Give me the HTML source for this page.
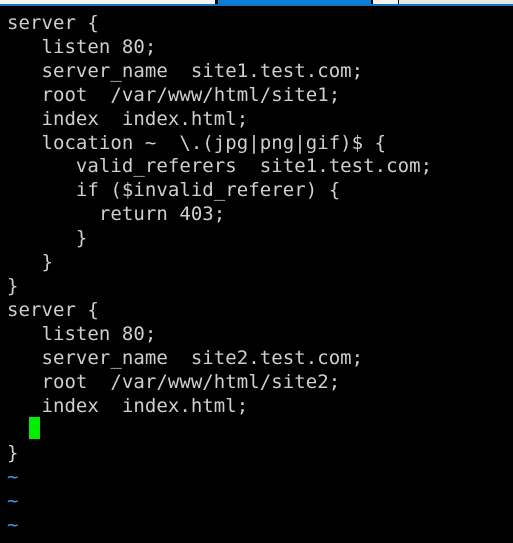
<!DOCTYPE html>
<html><head><style>
html,body{margin:0;padding:0;background:#000;width:513px;height:543px;overflow:hidden}
.bar{position:absolute;top:0;height:4px}
pre{position:absolute;left:7px;top:12px;margin:0;font-family:"DejaVu Sans Mono","Liberation Mono",monospace;font-size:19px;line-height:23.9px;color:#cfcfcf;letter-spacing:0.05px}
.t{color:#3b9fe0}
.cur{position:absolute;left:29px;top:417px;width:11px;height:22px;background:#00ee00}
</style></head><body>
<div class="bar" style="left:0;width:215px;background:#f4f4f4"></div>
<div class="bar" style="left:218px;width:153px;background:#0a7fd6"></div>
<div class="bar" style="left:373px;width:25px;background:#f4f4f4"></div>
<div class="bar" style="left:399px;width:114px;background:#e6e6e6"></div>
<div style="position:absolute;top:4px;left:0;width:513px;height:2px;background:#1a72c0"></div>
<pre>server {
   listen 80;
   server_name  site1.test.com;
   root  /var/www/html/site1;
   index  index.html;
   location ~  \.(jpg|png|gif)$ {
      valid_referers  site1.test.com;
      if ($invalid_referer) {
        return 403;
      }
   }
}
server {
   listen 80;
   server_name  site2.test.com;
   root  /var/www/html/site2;
   index  index.html;

}
<span class="t">~</span>
<span class="t">~</span>
<span class="t">~</span></pre>
<div class="cur"></div>
</body></html>
